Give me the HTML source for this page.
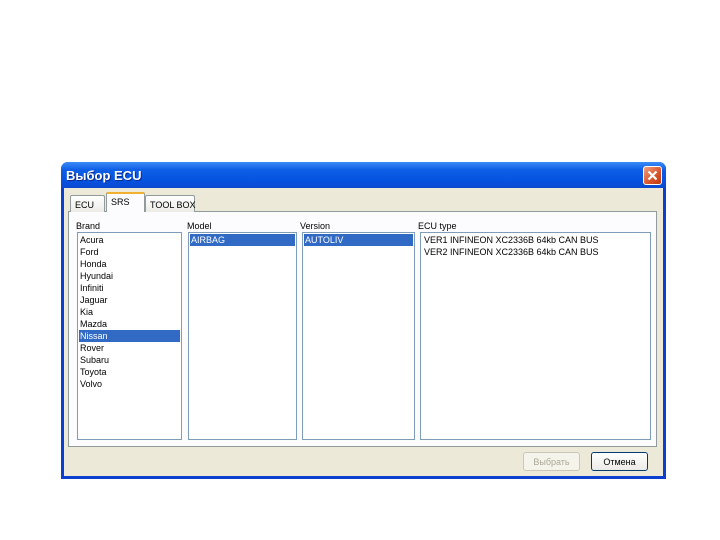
<!DOCTYPE html>
<html><head><meta charset="utf-8"><style>
*{box-sizing:border-box;margin:0;padding:0}
body{width:720px;height:540px;background:#fff;position:relative;overflow:hidden;font-family:"Liberation Sans","DejaVu Sans",sans-serif;font-size:9px;color:#000}
.win{position:absolute;left:61px;top:162px;width:605px;height:317px;background:#0a3fcf;border-radius:7px 7px 0 0}
.title{position:absolute;left:0;top:0;width:605px;height:26px;border-radius:7px 7px 0 0;background:linear-gradient(#3a8cf6,#0f5ee6 30%,#0553e0 70%,#0a49d0)}
.title span{position:absolute;left:5px;top:6px;color:#fff;font-weight:bold;font-size:13px;font-family:"Liberation Sans",sans-serif;text-shadow:1px 1px #0a2a90}
.close{position:absolute;left:582px;top:4px;width:19px;height:19px;border:1px solid #fff;border-radius:3px;background:linear-gradient(135deg,#f0a080,#d8542a 60%,#c03810)}
.body{position:absolute;left:3px;top:26px;width:599px;height:288px;background:#ece9d8}
.abs{position:absolute}
.panel{left:4px;top:23px;width:589px;height:236px;border:1px solid #919b9c;background:#fcfcfe}
.tab{position:absolute;height:17px;border:1px solid #919b9c;border-bottom:none;background:linear-gradient(#fff,#ecebe6);padding:4px 0 0 4px;border-radius:2px 2px 0 0;white-space:nowrap}
.lab{position:absolute}
.list{position:absolute;background:#fff;border:1px solid #7f9db9}
.list div{height:12px;line-height:13px;padding-left:1px;white-space:nowrap}
.sel{background:#316ac5;color:#fff}
.btn{position:absolute;height:19px;border:1px solid #003c74;border-radius:3px;background:linear-gradient(#fff,#ecebe6);text-align:center;line-height:18px}
</style></head><body>
<div class="win">
 <div class="title"><span>Выбор ECU</span>
  <div class="close"><svg width="17" height="17" style="position:absolute;left:0;top:0"><path d="M4.5 4.5L12.5 12.5M12.5 4.5L4.5 12.5" stroke="#fff" stroke-width="2.2"/></svg></div>
 </div>
 <div class="body">
  <div class="abs panel"></div>
  <div class="tab" style="left:6px;top:7px;width:35px">ECU</div>
  <div class="tab" style="left:42px;top:4px;width:39px;height:20px;background:#fcfcfe;border-top:2px solid #f0b030;padding-top:3px">SRS</div>
  <div class="tab" style="left:81px;top:7px;width:50px">TOOL BOX</div>
  <div class="lab" style="left:12px;top:33px">Brand</div>
  <div class="lab" style="left:123px;top:33px">Model</div>
  <div class="lab" style="left:236px;top:33px">Version</div>
  <div class="lab" style="left:354px;top:33px">ECU type</div>
  <div class="list" style="left:13px;top:44px;width:105px;height:208px;padding:1px">
   <div>Acura</div><div>Ford</div><div>Honda</div><div>Hyundai</div><div>Infiniti</div><div>Jaguar</div><div>Kia</div><div>Mazda</div><div class="sel">Nissan</div><div>Rover</div><div>Subaru</div><div>Toyota</div><div>Volvo</div>
  </div>
  <div class="list" style="left:124px;top:44px;width:109px;height:208px;padding:1px"><div class="sel">AIRBAG</div></div>
  <div class="list" style="left:238px;top:44px;width:113px;height:208px;padding:1px"><div class="sel">AUTOLIV</div></div>
  <div class="list" style="left:356px;top:44px;width:231px;height:208px;padding:1px 2px">
   <div>VER1 INFINEON XC2336B 64kb CAN BUS</div><div>VER2 INFINEON XC2336B 64kb CAN BUS</div>
  </div>
  <div class="btn" style="left:459px;top:264px;width:57px;border-color:#c9c7ba;color:#aca899;background:#f5f4ea">Выбрать</div>
  <div class="btn" style="left:527px;top:264px;width:57px">Отмена</div>
 </div>
</div>
</body></html>
